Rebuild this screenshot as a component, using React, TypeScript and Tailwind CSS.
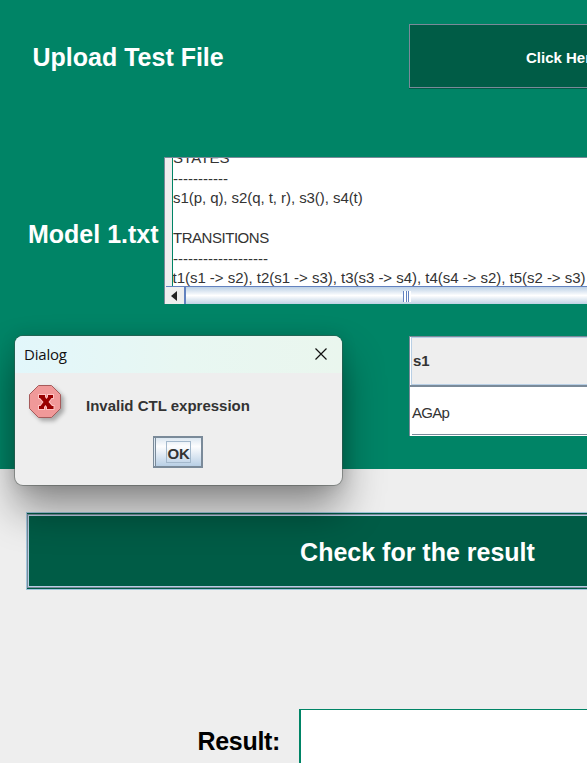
import React from 'react';

const modelLines = [
  { text: 'STATES', style: 'tracking-[0.1px]' },
  { text: '-----------', style: 'relative top-px' },
  { text: 's1(p, q), s2(q, t, r), s3(), s4(t)', style: 'tracking-[-0.06px]' },
  { text: '', style: '' },
  { text: 'TRANSITIONS', style: 'tracking-[-0.47px]' },
  { text: '-------------------', style: 'relative top-px' },
  { text: 't1(s1 -> s2), t2(s1 -> s3), t3(s3 -> s4), t4(s4 -> s2), t5(s2 -> s3)', style: '-ml-[0.5px] tracking-[-0.025px]' },
];

function UploadRow() {
  return (
    <div className="flex h-[65px] items-start">
      <h1 className="w-[409px] shrink-0 pl-[32.5px] pt-[18px] text-[25px] leading-[30px] font-bold text-white">Upload Test File</h1>
      <div className="h-[65px] w-[400px] shrink-0 border-b border-[#005c46]">
        <button className="flex h-[64px] w-full items-start border border-[#7a8a99] bg-[#005c46] pt-[24px] pl-[116px]">
          <span className="text-[15px] leading-[18px] font-bold text-white">Click Here</span>
        </button>
      </div>
    </div>
  );
}

function ModelViewer() {
  return (
    <div className="flex h-[147px] items-start">
      <h2 className="w-[164px] shrink-0 pl-[28px] pt-[62px] text-[25px] leading-[30px] font-bold whitespace-nowrap text-white">Model 1.txt</h2>
      <div className="flex h-[147px] w-[600px] shrink-0 flex-col border-t border-l border-[#7a8a99] bg-[#eee]">
        <div className="ml-[7px] flex h-[128px] flex-col justify-end overflow-hidden border-l border-[#008466] bg-white text-[15px] leading-5 text-[#333]">
          {modelLines.map((line, i) => (
            <div key={i} className="h-5 shrink-0 translate-y-[2px]">
              <p className={`whitespace-nowrap ${line.style}`}>{line.text}</p>
            </div>
          ))}
        </div>
        <div className="ml-px flex h-[18px] border-t border-[#6382bf]">
          <div className="flex w-[18px] items-center justify-center bg-[#eee]">
            <svg width="6" height="10" viewBox="0 0 6 10" className="-ml-[2px]"><path d="M6 0v10L0 5z" fill="#222" /></svg>
          </div>
          <div className="flex flex-1 border-l-2 border-[#6382bf] bg-gradient-to-b from-[#bdd1e5] via-white to-[#bfd2e4] pt-[4px] pl-[217px]">
            <i className="h-[11px] w-px bg-[#6382bf]" />
            <i className="h-[11px] w-[2px] bg-white" />
            <i className="h-[11px] w-px bg-[#6382bf]" />
            <i className="h-[11px] w-px bg-white" />
            <i className="h-[11px] w-px bg-[#6382bf]" />
            <i className="h-[11px] w-[2px] bg-white" />
          </div>
        </div>
      </div>
    </div>
  );
}

function StateTable() {
  return (
    <div className="ml-[409px] h-[100px] w-[400px] border-t border-l border-[#7a8a99] bg-white text-[15px] text-[#333]">
      <div className="ml-px h-[48px] border border-r-0 border-[#b8cfe5] bg-[#eee] pl-[1px] leading-[46px] font-bold">s1</div>
      <div className="h-[50px] border-t-2 border-[#7a8a99] pl-[2px]">
        <div className="h-[48px] border-b border-[#7a8a99] leading-[51px] tracking-[-0.7px]">AGAp</div>
      </div>
    </div>
  );
}

function ErrorIcon() {
  return (
    <svg width="42" height="42" viewBox="0 0 42 42" className="drop-shadow-[3px_3px_2px_rgba(0,0,0,0.3)]">
      <path d="M10.5 1.5h13l9 9v14l-9 9h-13l-9-9v-14z" fill="#f09999" stroke="#a65b5b" />
      <path
        d="M11 11h6v2l1.5 2 1.5-2v-2h5v3h-1.5l-3 4 3.5 4h1.5v3h-6.5v-2l-1.5-2-1.5 2v2h-5v-3h1.5l3-4-3.5-4h-1z"
        fill="#990000" stroke="#ffc2c2" strokeWidth="2" paintOrder="stroke"
      />
    </svg>
  );
}

function ErrorDialog() {
  return (
    <div className="absolute top-[336px] left-[15px] h-[149px] w-[327px] rounded-[8px] bg-[#eee] shadow-[0_0_0_1px_rgba(70,80,76,0.45),0_24px_42px_rgba(0,0,0,0.42),0_0_16px_rgba(0,0,0,0.12)]">
      <div className="flex h-[37px] justify-between rounded-t-[8px] bg-gradient-to-r from-[#e2f7fb] via-[#e8f7f2] to-[#eaf6ee] pr-[15px] pl-[9px]">
        <span className="pt-[8px] font-['Open_Sans','Noto_Sans',sans-serif] text-[15px] leading-5 tracking-[-0.2px] text-[#111]">Dialog</span>
        <svg width="12" height="12" viewBox="0 0 12 12" className="mt-[12px]"><path d="M.5.5l11 11M11.5.5l-11 11" stroke="#111" strokeWidth="1.2" /></svg>
      </div>
      <div className="flex h-[63px]">
        <div className="w-[71px] shrink-0 pt-[11px] pl-[13px]"><ErrorIcon /></div>
        <p className="pt-[24px] text-[15px] leading-[18px] font-bold whitespace-nowrap text-[#333]">Invalid CTL expression</p>
      </div>
      <button className="ml-[138px] flex h-[32px] w-[50px] border-2 border-l-0 border-[#7a8a99] bg-[#7a8a99]">
        <span className="mx-px h-[28px] w-px bg-[#dce7f1]" />
        <span className="flex h-[28px] flex-1 bg-gradient-to-b from-[#dce7f1] via-[#fdfdfe] via-30% to-[#b8cfe5] pt-[3px] pl-[10px]">
          <span className="flex h-[22px] w-[25px] items-center justify-center border border-[#a3b8cc] pt-[4px] text-[15px] leading-[18px] font-bold tracking-[-0.2px] text-[#333]">OK</span>
        </span>
      </button>
    </div>
  );
}

export default function App() {
  return (
    <main className="relative h-[763px] w-[587px] overflow-hidden bg-[#eee] font-['Liberation_Sans',Arial,sans-serif]">
      <section className="h-[469px] bg-[#008466] pt-[24px]">
        <UploadRow />
        <div className="mt-[68px]"><ModelViewer /></div>
        <div className="mt-[32px]"><StateTable /></div>
      </section>
      <section className="pt-[43px]">
        <div className="ml-[26px] h-[78px] w-[783px] border border-[#a0c4dc] bg-[#005c46] py-px">
          <button className="flex h-[74px] w-full border border-[#7a8a99]">
            <span className="block h-[72px] w-full border border-[#b8cfe5] pt-[21px] text-center text-[25px] leading-[30px] font-bold text-white">Check for the result</span>
          </button>
        </div>
        <div className="mt-[119px] flex">
          <h2 className="w-[299px] shrink-0 pt-[17px] pl-[197.5px] text-[25px] leading-[30px] font-bold tracking-[-0.3px] text-black">Result:</h2>
          <div className="h-[60px] w-[500px] shrink-0 border-t border-l-2 border-[#008466] bg-white" />
        </div>
      </section>
      <ErrorDialog />
    </main>
  );
}
